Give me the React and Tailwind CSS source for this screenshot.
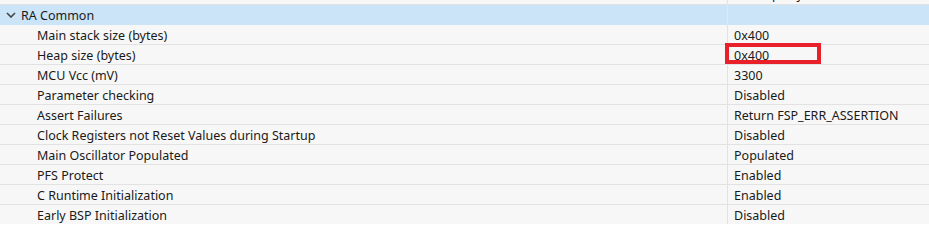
import React from 'react';

const rows = [
  ['Main stack size (bytes)', '0x400'],
  ['Heap size (bytes)', '0x400', true],
  ['MCU Vcc (mV)', '3300'],
  ['Parameter checking', 'Disabled'],
  ['Assert Failures', 'Return FSP_ERR_ASSERTION'],
  ['Clock Registers not Reset Values during Startup', 'Disabled'],
  ['Main Oscillator Populated', 'Populated'],
  ['PFS Protect', 'Enabled'],
  ['C Runtime Initialization', 'Enabled'],
  ['Early BSP Initialization', 'Disabled'],
];

const Chevron = () => (
  <svg width="10" height="6" viewBox="0 0 10 6" className="ml-[6px] mr-[5px]">
    <path d="M1 1 L5 5 L9 1" fill="none" stroke="#444" strokeWidth="1.6" />
  </svg>
);

export default function App() {
  return (
    <div
      className="w-[929px] h-[224px] overflow-hidden bg-[#f7f7f7] text-[12.5px] text-[#1a1a1a]"
      style={{ fontFamily: '"Noto Sans", "Liberation Sans", sans-serif' }}
    >
      {/* header strip, mostly scrolled away */}
      <div className="flex h-[5px] overflow-hidden border-b border-[#e2e2e2]">
        <div className="w-[728px] border-r border-[#e2e2e2]" />
        <div className="flex-1 pl-[24px] -mt-[15px] leading-[20px]">Property</div>
      </div>

      {/* group row */}
      <div className="flex h-[20px] bg-[#cce4f7] leading-[21px]">
        <div className="w-[728px] flex items-center border-r border-[#e0e8f0]">
          <Chevron />
          <span>RA Common</span>
        </div>
        <div className="flex-1" />
      </div>

      {rows.map(([label, value, marked]) => (
        <div key={label} className="flex h-[20px] border-b border-[#e2e2e2] leading-[21px]">
          <div className="w-[728px] pl-[37px] border-r border-[#e2e2e2] whitespace-nowrap">{label}</div>
          <div className="relative flex-1 pl-[6px] whitespace-nowrap">
            {value}
            {marked && (
              <div className="absolute left-[-3px] top-[-2px] w-[96px] h-[21px] border-4 border-[#e8202a]" />
            )}
          </div>
        </div>
      ))}
    </div>
  );
}
